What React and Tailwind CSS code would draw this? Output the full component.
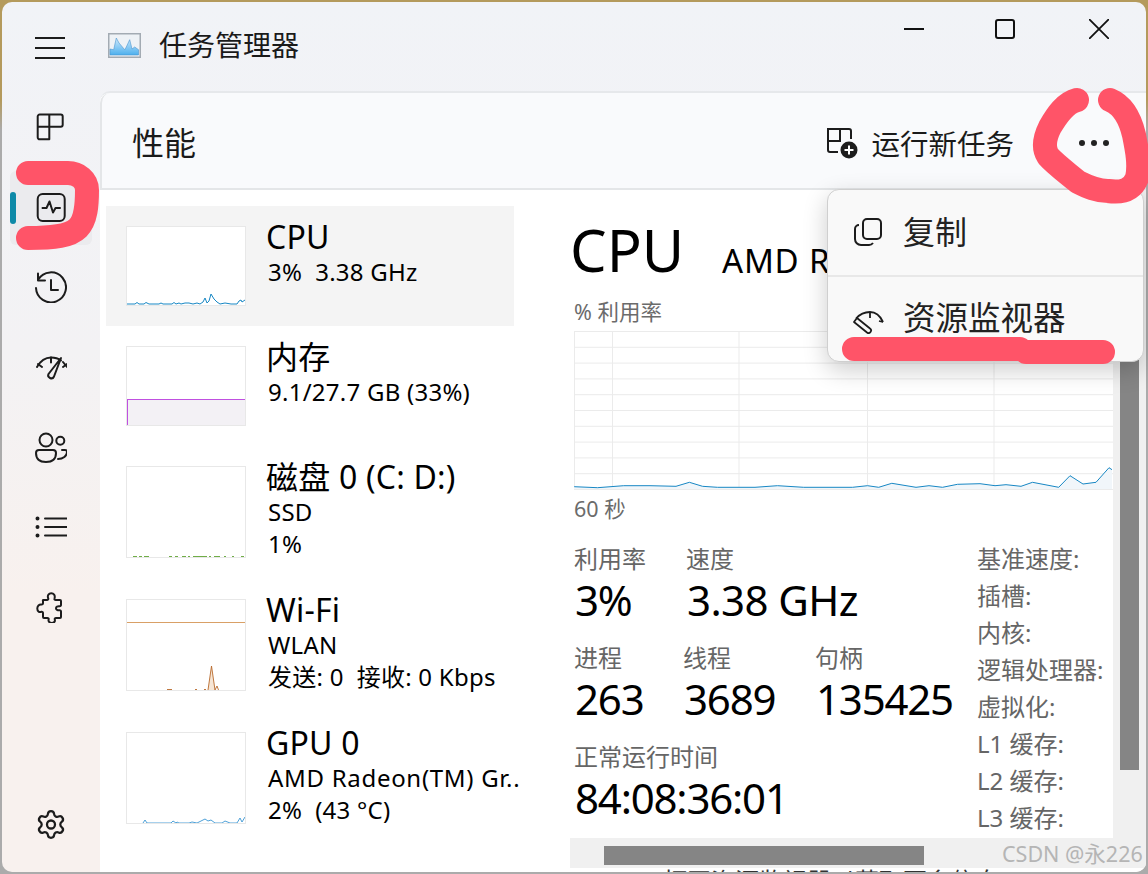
import React from "react";
import { Settings } from "lucide-react";

const cjk = { fontFamily: '"Noto Sans", "Noto Sans CJK SC", sans-serif' };

const I = ({ children, size = 32, vb = 32, sw = 2 }) => (
  <svg width={size} height={size} viewBox={`0 0 ${vb} ${vb}`} fill="none" stroke="#1c1c1c" strokeWidth={sw} strokeLinecap="round" strokeLinejoin="round">
    {children}
  </svg>
);

const Processes = () => (
  <I><path d="M2.700 15.700V5.500a2 2 0 0 1 2-2H25.700a2 2 0 0 1 2 2V13.700a2 2 0 0 1-2 2H2.700V26.300a2 2 0 0 0 2 2H14.300V3.500" /></I>
);
const Perf = () => (
  <I><rect x="2.700" y="3" width="27" height="27" rx="5" /><path d="M7.500 17h4l3-6.500 3.500 11 2.500-4.500h4.500" /></I>
);
const History = () => (
  <I><path d="M3 2.500v7h7" /><path d="M3.200 8.500A15 15 0 1 1 1 17" /><path d="M16 9v10h7" /></I>
);
const Startup = () => (
  <I>
    <path d="M2 16C6 9 11 6.500 16 6.500s8 1.500 10 3" />
    <path d="M28 11l4 5M16 6.500v5M3 13l4 3M32 13l-4 3" />
    <path d="M26 7L19 25.500a3 3 0 0 1-5.500-2.500z" />
  </I>
);
const Users = () => (
  <I>
    <circle cx="11" cy="9" r="6.500" />
    <circle cx="25.300" cy="9.700" r="4" />
    <path d="M1 22a3 3 0 0 1 3-3h14a3 3 0 0 1 3 3c0 6-4 9-10 9S1 28 1 22z" />
    <path d="M23 28c5 0 9-3 9-7 0-1.500-1-2-2-2h-3" />
  </I>
);
const Details = () => (
  <I sw={2}>
    <path d="M10 7.500h22M10 16h22M10 24.500h22" />
    <circle cx="2.500" cy="7.500" r="1" fill="#1c1c1c" />
    <circle cx="2.500" cy="16" r="1" fill="#1c1c1c" />
    <circle cx="2.500" cy="24.500" r="1" fill="#1c1c1c" />
  </I>
);
const Puzzle = () => (
  <I>
    <path d="M8 9h4c1 0 1.500-.8 1.200-1.500C12 4 14 2.300 16.300 2.300S20.500 4 19.500 7.500c-.3.8.3 1.500 1.200 1.500H25a1 1 0 0 1 1 1v4c0 .8-.8 1.300-1.500 1.200-2-.2-3.500.5-3.500 2s1.500 2.200 3.500 2c.7-.1 1.500.4 1.500 1.200V26a1 1 0 0 1-1 1h-4c-.9 0-1.500.7-1.200 1.500.6 2-1 3.500-3 3.500s-3.800-1.500-3.200-3.500c.3-.8-.3-1.500-1.200-1.500H9a1 1 0 0 1-1-1v-4c0-.8-.7-1.300-1.500-1.200C4 21.800 2.300 20 2.300 17.500S4 13.200 6.500 13.500c.8.1 1.500-.4 1.500-1.200V10a1 1 0 0 1 0-1z" />
  </I>
);

const NavItem = ({ children, active }) => (
  <div className="relative flex h-[80px] items-center justify-center">
    {active && <div className="absolute left-[8px] top-[4px] h-[74px] w-[82px] rounded-md bg-[#ebebee]" />}
    {active && <div className="absolute left-[8px] top-[25px] h-[32px] w-[6px] rounded-full bg-[#0e8aa8]" />}
    <div className="relative flex h-[32px] w-[32px] items-center justify-center">{children}</div>
  </div>
);

const Spark = ({ w = 120, h = 80, children }) => (
  <div className="shrink-0 border border-[#e8e8e8] bg-white" style={{ width: w, height: h }}>
    <svg width={w - 2} height={h - 2} viewBox={`0 0 ${w - 2} ${h - 2}`} className="block">{children}</svg>
  </div>
);

const ListRow = ({ active, height, graph, title, lines }) => (
  <div className={`flex w-[408px] gap-[20px] pl-[20px] pt-[20px] ${active ? "bg-[#f4f4f4]" : ""}`} style={{ height }}>
    {graph}
    <div className="-mt-[8px] min-w-0 whitespace-nowrap text-black">
      <div className="text-[32px] leading-[38px] tracking-[0.2px]">{title}</div>
      {lines.map((l) => (
        <div key={l} className={`whitespace-pre pl-[2px] text-[24px] leading-[32px] ${l.startsWith("AMD") ? "tracking-[0.7px]" : "tracking-[0.25px]"}`}>{l}</div>
      ))}
    </div>
  </div>
);

const Stat = ({ label, value, w, wide }) => (
  <div className="whitespace-nowrap" style={{ width: w }}>
    <div className="text-[24px] leading-[30px] text-[#666]">{label}</div>
    <div className={`mt-[1px] pl-[1px] text-[42px] leading-[50px] text-black ${wide ? "tracking-[-0.6px]" : "tracking-[-1.2px]"}`}>{value}</div>
  </div>
);

const gridH = Array.from({ length: 11 }, (_, i) => i * 15.8 + 0.5);
const gridV = [38.5, 165, 293.5, 420];
const cpuPts = "0.2,155.7 23.500,156.700 49.700,154.700 76,154.700 102,155.300 115.400,151.300 128.500,155.300 143.500,156.300 181,156.300 203.500,154.700 229.700,156.300 278.500,156.300 293.500,154.700 304.700,156.300 317.800,152.300 342,156.300 355,154.700 368.500,156.300 383.500,153.300 406,152.700 421,154.700 432,153.700 447,155.300 458.500,151.300 484.700,156.300 496,144.700 509,153 522,151.300 535,136.700 538,138.700";

export default function App() {
  return (
    <div className="relative h-[874px] w-[1148px] overflow-hidden bg-[linear-gradient(180deg,#b49a5c_0,#b49a5c_100px,#ababab_130px)] p-[2px]" style={cjk}>
      <div className="flex h-[870px] flex-col overflow-hidden rounded-[10px] bg-[linear-gradient(180deg,#f1f3f7_0%,#f3f2f4_40%,#f8f1ee_68%,#f8f1ee_100%)]">
        {/* title bar */}
        <div className="flex h-[85px] shrink-0 items-start">
          <div className="ml-[33px] mt-[35px] flex w-[73px] flex-col gap-[8px]">
            <div className="h-[2px] w-[30px] bg-[#1c1c1c]" />
            <div className="h-[2px] w-[30px] bg-[#1c1c1c]" />
            <div className="h-[2px] w-[30px] bg-[#1c1c1c]" />
          </div>
          <svg width="33" height="25" viewBox="0 0 33 25" className="mt-[31px] shrink-0">
            <defs>
              <linearGradient id="tm" x1="0" y1="0" x2="0" y2="1">
                <stop offset="0" stopColor="#cfe9fb" />
                <stop offset="1" stopColor="#4db0ee" />
              </linearGradient>
            </defs>
            <rect x="0.750" y="0.750" width="31.500" height="23.500" fill="#eef2f6" stroke="#a3abb3" strokeWidth="1.500" />
            <path d="M2 22V16L5.700 16.700 8.300 5 11 10 16.700 16.700 18.300 14 21.700 6.700 24 16 26.700 14 30.500 16.700V22z" fill="url(#tm)" stroke="#4a94cf" strokeWidth="0.600" />
          </svg>
          <div className="ml-[18px] mt-[23px] text-[28px] leading-[40px] text-[#1a1a1a]">任务管理器</div>
          <div className="ml-auto mt-[17px] flex items-center pr-[37px]">
            <div className="mr-[71px] h-[2px] w-[20px] bg-[#111]" />
            <div className="mr-[74px] h-[20px] w-[20px] rounded-[3px] border-2 border-[#111]" />
            <svg width="20" height="20" viewBox="0 0 20 20" stroke="#111" strokeWidth="1.800"><path d="M0 0l20 20M20 0L0 20" /></svg>
          </div>
        </div>

        <div className="flex min-h-0 flex-1">
          {/* sidebar */}
          <div className="flex w-[98px] shrink-0 flex-col pb-[8px]">
            <NavItem><Processes /></NavItem>
            <NavItem active><Perf /></NavItem>
            <NavItem><History /></NavItem>
            <NavItem><Startup /></NavItem>
            <NavItem><Users /></NavItem>
            <NavItem><Details /></NavItem>
            <NavItem><Puzzle /></NavItem>
            <div className="mt-auto"><NavItem><Settings size={33} strokeWidth={1.7} color="#1c1c1c" /></NavItem></div>
          </div>

          {/* panel */}
          <div className="mt-[4px] flex min-w-0 flex-1 flex-col overflow-hidden rounded-tl-[10px] border-t-2 border-[#e6e8eb] bg-white">
            <div className="flex h-[97px] shrink-0 items-center rounded-tl-[10px] border-b-2 border-l-2 border-[#e4e6e8] bg-[#f9fafc] pt-[4px]">
              <div className="ml-[30px] text-[32px] leading-[44px] text-[#1a1a1a]">性能</div>
              <svg width="34" height="34" viewBox="0 0 34 34" fill="none" stroke="#1c1c1c" strokeWidth="2" className="ml-auto">
                <path d="M2 3h12v12H2zM14 3h9a2 2 0 0 1 2 2v8M2 15v9a2 2 0 0 0 2 2h8" />
                <circle cx="23" cy="24" r="8.500" fill="#1c1c1c" stroke="none" />
                <path d="M23 19.500v9M18.500 24h9" stroke="#fff" />
              </svg>
              <div className="ml-[11px] mt-[2px] whitespace-nowrap text-[28.5px] leading-[40px] text-[#1a1a1a]">运行新任务</div>
              <div className="ml-[65px] mr-[37px] flex gap-[6px]">
                <div className="h-[6px] w-[6px] rounded-full bg-[#222]" />
                <div className="h-[6px] w-[6px] rounded-full bg-[#222]" />
                <div className="h-[6px] w-[6px] rounded-full bg-[#222]" />
              </div>
            </div>

            <div className="flex h-[648px] shrink-0 overflow-hidden">
              {/* list */}
              <div className="w-[474px] shrink-0 pl-[6px] pt-[16px]">
                <ListRow active height={120} title="CPU" lines={["3%  3.38 GHz"]} graph={
                  <Spark>
                    <polyline fill="none" stroke="#1787c4" strokeWidth="1" points="0,77 8,77 10,75.500 12,77 17,77 19,75.500 22,77 32,77 34,76 36,77 45,77 47,75.500 49,77 52,76 54,77 58,76 62,76 66,77 70,76 73,77 76,75 78,71 80,76 82,74 84,67 87,72 90,75 93,77 98,76 104,77 110,77 112,74 114,73 115,75 118,73" />
                  </Spark>
                } />
                <ListRow height={120} title="内存" lines={["9.1/27.7 GB (33%)"]} graph={
                  <Spark>
                    <rect x="0" y="52" width="118" height="26" fill="#f3f1f5" />
                    <rect x="0" y="52" width="118" height="1" fill="#c050e0" />
                    <rect x="0" y="52" width="1" height="26" fill="#c050e0" />
                  </Spark>
                } />
                <ListRow height={133} title="磁盘 0 (C: D:)" lines={["SSD", "1%"]} graph={
                  <Spark h={92}>
                    <path d="M6 89.500h4M12 89.500h3M17 89.500h5M42 89.500h3M48 89.500h3M55 89.500h4M61 89.500h2M66 89.500h14M82 89.500h2M87 89.500h6M97 89.500h2M105 89.500h2M114 89.500h3" stroke="#70ad47" strokeWidth="1.200" />
                  </Spark>
                } />
                <ListRow height={133} title="Wi-Fi" lines={["WLAN", "发送: 0  接收: 0 Kbps"]} graph={
                  <Spark h={92}>
                    <path d="M0 22.500h118" stroke="#d9a066" />
                    <path d="M81 90L84.500 66 88 90z" fill="#f6e6d6" />
                    <path d="M40 89.500h5M68 89.500h2M77 89.500h2M81 90L84.500 66 88 90M88 90l2-4 1.500 4" fill="none" stroke="#b8692a" strokeWidth="0.900" />
                  </Spark>
                } />
                <ListRow height={120} title="GPU 0" lines={["AMD Radeon(TM) Gr..", "2%  (43 °C)"]} graph={
                  <Spark h={92}>
                    <polyline fill="none" stroke="#3a96d4" strokeWidth="0.900" points="16,90 18,87 20,90 44,90 46,88 49,90 50,89 52,90 62,90 65,89 70,90 74,88 78,86 81,88 84,87 88,90 95,90 98,88 103,90 110,90 113,85 115,89 118,84" />
                  </Spark>
                } />
              </div>

              {/* main */}
              <div className="w-[539px] shrink-0 pt-[27px]">
                <div className="flex h-[70px] items-center whitespace-nowrap text-black">
                  <div className="-ml-[4px] w-[152px] pb-[4px] text-[58px] leading-[66px]">CPU</div>
                  <div className="pt-[18px] text-[33px] leading-[44px] tracking-[0.8px]">AMD Ryzen 7</div>
                </div>
                <div className="mt-[10px] h-[30px] text-[21.5px] leading-[30px] text-[#6b6b6b]">% 利用率</div>
                <svg width="539" height="160" viewBox="0 0 539 160" className="mt-[4px] block">
                  {gridH.map((y) => <line key={y} x1="0" x2="539" y1={y} y2={y} stroke="#ebebeb" />)}
                  <line x1="0.500" x2="0.500" y1="0" y2="158" stroke="#ebebeb" />
                  {gridV.map((x) => <line key={x} x1={x} x2={x} y1="0" y2="158" stroke="#ebebeb" />)}
                  <polygon points={`${cpuPts} 538,158 0,158`} fill="#f1f6fa" />
                  <polyline points={cpuPts} fill="none" stroke="#1787c4" strokeWidth="1" />
                </svg>
                <div className="mt-[3px] h-[30px] text-[21.5px] leading-[30px] text-[#6b6b6b]">60 秒</div>

                <div className="mt-[20px] flex">
                  <div className="flex w-[403px] shrink-0 flex-col gap-[18px]">
                    <div className="flex">
                      <Stat label="利用率" value="3%" w={112} />
                      <Stat label="速度" value="3.38 GHz" w={220} wide />
                    </div>
                    <div className="flex">
                      <Stat label="进程" value="263" w={109} />
                      <Stat label="线程" value="3689" w={132} />
                      <Stat label="句柄" value="135425" w={160} />
                    </div>
                    <Stat label="正常运行时间" value="84:08:36:01" w={300} />
                  </div>
                  <div className="-mt-[4px] whitespace-nowrap text-[24px] leading-[37px] text-[#666]">
                    {["基准速度:", "插槽:", "内核:", "逻辑处理器:", "虚拟化:", "L1 缓存:", "L2 缓存:", "L3 缓存:"].map((t) => (
                      <div key={t}>{t}</div>
                    ))}
                  </div>
                </div>
              </div>

              {/* vertical scrollbar */}
              <div className="w-[33px] shrink-0 bg-[#f0f0f0] pl-[7px] pt-[170px]">
                <div className="h-[410px] w-[19px] bg-[#858585]" />
              </div>
            </div>

            {/* horizontal scrollbar */}
            <div className="ml-[470px] h-[30px] shrink-0 bg-[#f0f0f0] pl-[34px] pt-[8px]">
              <div className="h-[19px] w-[320px] bg-[#858585]" />
            </div>
            <div className="h-[4px] overflow-hidden whitespace-nowrap pl-[563px] text-[24px] leading-[26px] text-[#333]">打开资源监视器以获取更多信息</div>
          </div>
        </div>
      </div>

      {/* context menu */}
      <div className="absolute left-[827px] top-[189px] h-[173px] w-[317px] rounded-[12px] border border-[#cfcfcf] bg-[#f9f9f9] shadow-[0_8px_24px_rgba(0,0,0,0.2)]">
        <div className="flex h-[87px] items-center border-b-2 border-[#e8e8e8] pb-[2px] pl-[25px]">
          <svg width="32" height="32" viewBox="0 0 32 32" fill="none" stroke="#1c1c1c" strokeWidth="2">
            <rect x="10" y="3" width="18" height="20" rx="4" />
            <path d="M6 9a4 4 0 0 0-4 4v10a6 6 0 0 0 6 6h8a5 5 0 0 0 4-2" />
          </svg>
          <div className="ml-[18px] text-[32px] leading-[44px] text-[#222]">复制</div>
        </div>
        <div className="flex items-center pl-[25px] pt-[29px]">
          <svg width="32" height="32" viewBox="0 0 32 32" fill="none" stroke="#1c1c1c" strokeWidth="1.800" strokeLinejoin="round">
            <path d="M3 11.500C7 7 12 5 17 5c5.500 0 10 3.500 13 10" />
            <path d="M17 5v6M30 15l-4-1" />
            <path d="M1 15l13 10.500a2.500 2.500 0 0 0 3-4L4 11z" />
          </svg>
          <div className="ml-[18px] -mt-[10px] text-[32.5px] leading-[44px] text-[#222]">资源监视器</div>
        </div>
      </div>

      {/* red annotation strokes */}
      <svg width="1148" height="874" viewBox="0 0 1148 874" fill="none" stroke="#ff5468" strokeWidth="24" strokeLinecap="round" strokeLinejoin="round" className="pointer-events-none absolute left-0 top-0">
        <path d="M28 173H68C78 173 87 180 87 190C87 205 86 220 78 228C70 236 55 238 28 238" />
        <path d="M1077 100C1065 103 1057 115 1050 127C1045 137 1043 148 1048 156C1055 164 1066 172 1078 182C1088 187 1097 191 1108 191C1122 193 1132 190 1137 178C1140 165 1137 150 1134 135C1130 118 1122 105 1110 100" />
        <path d="M854 349H1020M1026 352H1103" />
      </svg>

      {/* watermark */}
      <div className="absolute left-[1002px] top-[838px] whitespace-nowrap text-[21.5px] leading-[32px] text-[#b5b5b5]">CSDN @永226</div>
    </div>
  );
}
